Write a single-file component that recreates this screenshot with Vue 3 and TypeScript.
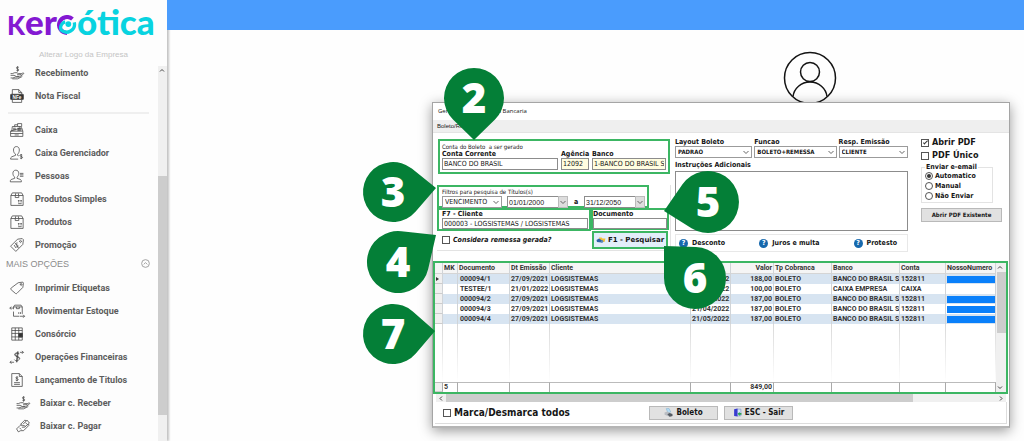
<script setup lang="ts">
import { computed, ref } from 'vue'

interface MenuEntry { label: string; icon: string; sub?: boolean }
interface Row { doc: string; issued: string; client: string; due: string; value: string; kind: string; bank: string; account: string; masked: boolean }
interface Pin { n: number; cx: number; cy: number; r: number; tx: number; ty: number }

const icons: Record<string, string> = {
  receive: 'M15 2.500c-1-1.200-4-1.200-4 .8s4 1.400 4 3.400-3 2-4 .6M13 .5v9M1 13h3l4-1.500h4l2 1.500h4c1.500 0 1.500 2 0 2h-6M18 14l4-2c1.500-.6 2 1 1 1.800L16 19H9l-4 1.500H1M1 16h6l4 2h5M4 22h9l8-4',
  invoice: 'M4 9V1h11l5 5v3M15 1v5h5M4 18v5h16v-5',
  register: 'M3 14l1-8h9M8 6V3h5M13 1h7v5h-7zM16 6v2M20 8l2 6v9H1v-9zM1 14h21M1 18h21M5 9h5M5 11.500h5M13 10h7M13 12h7M8 20.500h7M14 8v6M17 8v6',
  manager: 'M11 1C7.500 1 6 3.500 6 7c0 3 1.500 6 3.500 7v2L3 18.500c-1.500.8-2 2-2 4h13M11 1c3.500 0 5 2.500 5 6 0 3-1.500 6-3 7v2l2 1M21 15.500c-1-1-4-1-4 .8s4.500 1.200 4.500 3.200-3.500 2-4.500.7M19.300 14v8.500',
  people: 'M10 2C6.500 2 5 4.500 5 7.500c0 3 1.500 5.500 3 6.500v2L2 18c-1.200.6-1.500 2-1.500 4h19c0-2-.3-3.400-1.500-4l-6-2v-2c1.500-1 3-3.500 3-6.500C15 4.500 13.500 2 10 2zM17 7.500h6M17 10h6M17 12.500h6',
  box: 'M1.500 6L4 1.500h16L22.500 6v17h-21zM1.500 6h21M9 6l1-4M15 6l-1-4M9 6v3.500h6V6M14 20h6M15 18v-4l-1.200 1.200M15 14l1.200 1.200M19 18v-4l-1.200 1.200M19 14l1.200 1.200',
  promo: 'M13 2l8-1 2 2-1 8L10 23 1 14zM18 4.500a1.500 1.500 0 1 0 .1 0M13 8.500c-1.500-1-3.500.6-2.500 2.200s3 1 3.500 2.600-2 3-3.500 1.700M9 9l5.500 8M7 12l3 5',
  tag: 'M14 3l7-1c1.500 0 2 .5 2 2l-1 7-10 10c-1 1-2 1-3 0l-7-6c-1-1-1-2 0-3zM19 4.500a1.500 1.500 0 1 0 .1 0',
  move: 'M6 9V5l2-3h11l2 3v12M6 13v8h10M6 5h15M11 5v3h5V5M5 7H0M2 4.500L-.5 7 2 9.500M17 21h8M22.500 18.500L25 21l-2.500 2.500M15 17v-3M18 17v-3',
  grid: 'M3 1.500h18v21H3zM3 6h18M3 11h18M3 17h18M9 1.500v21M15 1.500v21M16 11h5v6h-5zM17 12h3v4h-3zM18 13v2',
  ops: 'M16 7c-1-3-8-3-8 1s8 3 8 7-7 4.500-8.500 1.500M15 7c-1-2-6-2-6 1s8 3 8 7M13 2.500L11 21M14 2.500L12 21M17 4h6M20.500 1.500L23 4l-2.500 2.500M7 21H0M2.500 18.500L0 21l2.500 2.500',
  title: 'M3 1h13l5 5v17H3zM16 1v5h5M14 7.500c-1-1-4-1-4 .8s4 1 4 3-3.500 2-4.300.7M12 6v8M7 16.500h10M7 19.500h10',
  pay: 'M1 17l6-6c1-1 3-1 4 0l5 1M1 17l3 5 4-2h5l9-9c.7-1.500-.7-2.500-2-1.800L15 14h-5M12 9l7-7 4 5-4 3.500M10 11l-2-2 7-7 3 1M16 6l3 3M6 15l3 3',
}

const mainMenu: MenuEntry[] = [
  { label: 'Caixa', icon: 'register' },
  { label: 'Caixa Gerenciador', icon: 'manager' },
  { label: 'Pessoas', icon: 'people' },
  { label: 'Produtos Simples', icon: 'box' },
  { label: 'Produtos', icon: 'box' },
  { label: 'Promoção', icon: 'promo' },
]
const menus: { id: string; items: MenuEntry[] }[] = [
  { id: 'top', items: [{ label: 'Recebimento', icon: 'receive' }, { label: 'Nota Fiscal', icon: 'invoice' }] },
  { id: 'main', items: mainMenu },
  {
    id: 'more',
    items: [
      { label: 'Imprimir Etiquetas', icon: 'tag' },
      { label: 'Movimentar Estoque', icon: 'move' },
      { label: 'Consórcio', icon: 'grid' },
      { label: 'Operações Financeiras', icon: 'ops' },
      { label: 'Lançamento de Titulos', icon: 'title' },
      { label: 'Baixar c. Receber', icon: 'receive', sub: true },
      { label: 'Baixar c. Pagar', icon: 'pay', sub: true },
    ],
  },
]

const rows: Row[] = [
  { doc: '000094/1', issued: '27/09/2021', client: 'LOGSISTEMAS', due: '21/02/2022', value: '188,00', kind: 'BOLETO', bank: 'BANCO DO BRASIL S', account: '152811', masked: true },
  { doc: 'TESTEE/1', issued: '21/01/2022', client: 'LOGSISTEMAS', due: '21/02/2022', value: '100,00', kind: 'BOLETO', bank: 'CAIXA EMPRESA', account: 'CAIXA', masked: false },
  { doc: '000094/2', issued: '27/09/2021', client: 'LOGSISTEMAS', due: '21/03/2022', value: '187,00', kind: 'BOLETO', bank: 'BANCO DO BRASIL S', account: '152811', masked: true },
  { doc: '000094/3', issued: '27/09/2021', client: 'LOGSISTEMAS', due: '21/04/2022', value: '187,00', kind: 'BOLETO', bank: 'BANCO DO BRASIL S', account: '152811', masked: true },
  { doc: '000094/4', issued: '27/09/2021', client: 'LOGSISTEMAS', due: '21/05/2022', value: '187,00', kind: 'BOLETO', bank: 'BANCO DO BRASIL S', account: '152811', masked: true },
]

const pins: Pin[] = [
  { n: 2, cx: 474, cy: 98, r: 30, tx: 474, ty: 140 },
  { n: 3, cx: 393, cy: 192, r: 30, tx: 436, ty: 188 },
  { n: 4, cx: 398, cy: 262, r: 31, tx: 436, ty: 235 },
  { n: 5, cx: 708, cy: 202, r: 31, tx: 664, ty: 211 },
  { n: 6, cx: 695, cy: 278, r: 31, tx: 664, ty: 246 },
  { n: 7, cx: 393, cy: 334, r: 30, tx: 435, ty: 331 },
]

/* A drop: the large arc of the circle closed by its two tangents through the tip. */
const drops = computed(() => pins.map((p) => {
  const dx = p.tx - p.cx
  const dy = p.ty - p.cy
  const base = Math.atan2(dy, dx)
  const spread = Math.acos(Math.min(1, p.r / Math.hypot(dx, dy)))
  const at = (a: number) => `${(p.cx + p.r * Math.cos(a)).toFixed(1)} ${(p.cy + p.r * Math.sin(a)).toFixed(1)}`
  return { ...p, d: `M${p.tx} ${p.ty}L${at(base + spread)}A${p.r} ${p.r} 0 1 1 ${at(base - spread)}Z` }
}))

const account = ref('BANCO DO BRASIL')
const agency = ref('12092')
const bank = ref('1-BANCO DO BRASIL S.A.')
const dateFrom = ref('01/01/2000')
const dateTo = ref('31/12/2050')
const client = ref('000003 - LOGSISTEMAS / LOGSISTEMAS')
const documentNo = ref('')
const notes = ref('')
const includeSent = ref(false)
const openPdf = ref(true)
const singlePdf = ref(false)
const markAll = ref(false)
const mailMode = ref('Automatico')
const choices = [
  { id: 'layout', label: 'Layout Boleto', value: 'PADRAO' },
  { id: 'role', label: 'Funcao', value: 'BOLETO+REMESSA' },
  { id: 'issuer', label: 'Resp. Emissão', value: 'CLIENTE' },
]
</script>

<template>
  <div class="app">
    <aside class="sidebar">
      <div class="logo">
        <span class="k">K</span><span class="er">er</span>
        <svg class="ring" viewBox="0 0 22 22" aria-hidden="true">
          <path d="M17 4.500A8.800 8.800 0 1 0 11 19.800" fill="none" stroke="#8419d2" stroke-width="4.400" />
          <path d="M19 8A8.800 8.800 0 0 1 4.500 16.500C3 13 5 8.500 9 7.500" fill="none" stroke="#08d3e0" stroke-width="3.600" />
          <circle cx="12.500" cy="10" r="3.200" fill="#08d3e0" />
        </svg>
        <span class="otica">ótica</span>
      </div>
      <a class="change" href="#">Alterar Logo da Empresa</a>
      <div class="scroller">
        <nav class="menu">
          <template v-for="group in menus" :key="group.id">
            <h2 v-if="group.id === 'more'">MAIS OPÇÕES
              <svg viewBox="0 0 10 10" aria-hidden="true"><circle cx="5" cy="5" r="4.300" /><path d="M3 6l2-2 2 2" /></svg>
            </h2>
            <ul :class="group.id">
              <li v-for="item in group.items" :key="item.label" :class="{ sub: item.sub }">
                <a href="#">
                  <svg viewBox="0 0 24 24" aria-hidden="true">
                    <path :d="icons[item.icon]" />
                    <g v-if="item.icon === 'invoice'"><rect x="1" y="9" width="22" height="9" rx="1" fill="#333" /><text x="12" y="16.500" text-anchor="middle">NFe</text></g>
                    <rect v-if="item.icon === 'grid'" x="15" y="11" width="6" height="6" fill="#333" />
                  </svg>
                  {{ item.label }}
                </a>
              </li>
            </ul>
          </template>
        </nav>
        <div class="track"><svg viewBox="0 0 8 8" aria-hidden="true"><path d="M2 5l2-2 2 2" /></svg><span class="thumb"></span></div>
      </div>
    </aside>

    <main>
      <header></header>
      <svg class="avatar" viewBox="0 0 54 54" aria-label="Usuário" role="img">
        <circle cx="27" cy="27" r="25.500" /><circle cx="27" cy="21" r="9.500" /><path d="M10 45.500c1-8 8-14.500 17-14.500s16 6.500 17 14.500" />
      </svg>

      <section class="dialog">
        <h1>Gerenciador Cobrança Bancaria</h1>
        <div class="tabs"><button type="button">Boleto/Remessa</button></div>

        <form class="body" @submit.prevent>
          <div class="form">
            <div class="left">
              <fieldset class="mark account">
                <legend>Conta do Boleto&nbsp; a ser gerado</legend>
                <label class="wide">Conta Corrente<input v-model="account" type="text"></label>
                <label class="agency">Agência<input v-model="agency" type="text"></label>
                <label class="bank">Banco<input v-model="bank" type="text"></label>
              </fieldset>

              <div class="filters">
                <fieldset class="mark period">
                  <legend>Filtros para pesquisa de Títulos(s)</legend>
                  <span class="pick kind"><select aria-label="Tipo de data"><option>VENCIMENTO</option></select><svg viewBox="0 0 8 8"><path d="M1.500 3L4 5.500 6.500 3" /></svg></span>
                  <span class="pick date"><input v-model="dateFrom" type="text" aria-label="Data inicial"><svg viewBox="0 0 8 8"><path d="M1.500 3L4 5.500 6.500 3" /></svg></span>
                  <b>a</b>
                  <span class="pick date"><input v-model="dateTo" type="text" aria-label="Data final"><svg viewBox="0 0 8 8"><path d="M1.500 3L4 5.500 6.500 3" /></svg></span>
                </fieldset>
                <div class="pair">
                  <label class="mark client">F7 - Cliente<input v-model="client" type="text"></label>
                  <label class="mark docno">Documento<input v-model="documentNo" type="text"></label>
                </div>
                <div class="actions">
                  <label class="tick"><input v-model="includeSent" type="checkbox"><i>Considera remessa gerada?</i></label>
                  <button class="mark search" type="button">
                    <svg viewBox="0 0 20 14" aria-hidden="true"><path d="M6 2h5l2 2h6l-2 7H8z" fill="#f3c13a" /><path d="M1 7l5-3 8 5-3 3-9-1z" fill="#2b62a8" /><circle cx="12" cy="10" r="2.500" fill="#5a87bd" /></svg>
                    F1 - Pesquisar
                  </button>
                </div>
              </div>
            </div>

            <div class="middle">
              <div class="choices">
                <label v-for="c in choices" :key="c.id" :class="c.id">{{ c.label }}
                  <span class="pick"><select><option>{{ c.value }}</option></select><svg viewBox="0 0 8 8"><path d="M1.500 3L4 5.500 6.500 3" /></svg></span>
                </label>
              </div>
              <label class="notes">Instruções Adicionais<textarea v-model="notes"></textarea></label>
              <div class="help">
                <button v-for="h in ['Desconto', 'Juros e multa', 'Protesto']" :key="h" type="button"><span class="q">?</span>{{ h }}</button>
              </div>
            </div>

            <div class="right">
              <label class="tick big"><input v-model="openPdf" type="checkbox">Abrir PDF</label>
              <label class="tick big"><input v-model="singlePdf" type="checkbox">PDF Único</label>
              <fieldset class="mail">
                <legend>Enviar e-email</legend>
                <label v-for="m in ['Automatico', 'Manual', 'Não Enviar']" :key="m" class="tick"><input v-model="mailMode" type="radio" name="mail" :value="m">{{ m }}</label>
              </fieldset>
              <button class="plain" type="button">Abrir PDF Existente</button>
            </div>
          </div>

          <div class="mark gridbox">
            <table>
              <colgroup><col class="c-ind"><col class="c-mk"><col class="c-doc"><col class="c-date"><col><col class="c-date"><col class="c-val"><col class="c-kind"><col class="c-bank"><col class="c-acc"><col class="c-num"></colgroup>
              <thead>
                <tr><th></th><th>MK</th><th>Documento</th><th>Dt Emissão</th><th>Cliente</th><th></th><th class="num">Valor</th><th>Tp Cobranca</th><th>Banco</th><th>Conta</th><th>NossoNumero</th></tr>
              </thead>
              <tbody>
                <tr v-for="(r, i) in rows" :key="r.doc">
                  <td class="ind"><span v-if="i === 0" class="arrow"></span></td><td></td><td>{{ r.doc }}</td><td>{{ r.issued }}</td><td>{{ r.client }}</td><td>{{ r.due }}</td>
                  <td class="num">{{ r.value }}</td><td>{{ r.kind }}</td><td>{{ r.bank }}</td><td>{{ r.account }}</td><td><span v-if="r.masked" class="bar"></span></td>
                </tr>
                <tr class="rest"><td v-for="n in 11" :key="n"></td></tr>
              </tbody>
              <tfoot>
                <tr><td class="ind"></td><td>5</td><td></td><td></td><td></td><td></td><td class="num">849,00</td><td></td><td></td><td></td><td></td></tr>
              </tfoot>
            </table>
            <div class="vbar"><svg viewBox="0 0 8 8"><path d="M2 5l2-2 2 2" /></svg><span></span><svg viewBox="0 0 8 8"><path d="M2 3l2 2 2-2" /></svg></div>
          </div>
          <div class="hbar"><svg viewBox="0 0 8 8"><path d="M5 2L3 4l2 2" /></svg><span></span><svg viewBox="0 0 8 8"><path d="M3 2l2 2-2 2" /></svg></div>

          <footer>
            <label class="tick all"><input v-model="markAll" type="checkbox">Marca/Desmarca todos</label>
            <button class="plain cmd" type="button">
              <svg viewBox="0 0 16 16" aria-hidden="true"><path d="M4 1h5l3 6-5 2z" fill="#b5dcf5" stroke="#83b4d5" /><path d="M1 8l5-2 9 4v4l-5 1.500L1 12z" fill="#b8bcc2" /><path d="M6 11l4-2 5 2v3l-5 1.500z" fill="#555b63" /></svg>
              Boleto
            </button>
            <button class="plain cmd" type="button">
              <svg viewBox="0 0 16 16" aria-hidden="true"><path d="M7 2h7v12H7z" fill="#d6e6f7" stroke="#6b87c7" /><path d="M2 2l6-1v14l-6-1z" fill="#3a3bd0" /><path d="M8 10l4-3v2h3v3h-3v2z" fill="#2ba351" /></svg>
              ESC - Sair
            </button>
          </footer>
        </form>
      </section>
    </main>

    <svg class="pins">
      <g v-for="p in drops" :key="p.n"><path :d="p.d" /><text :x="p.cx" :y="p.cy + 15">{{ p.n }}</text></g>
    </svg>
  </div>
</template>

<style>
html, body { background: #fefefe; }
</style>

<style scoped>
.app { position: relative; display: flex; min-height: 100vh; overflow: hidden; font: 7px/8px "DejaVu Sans Condensed", "DejaVu Sans", sans-serif; color: #161616; }
.app *, .app *::before { box-sizing: border-box; }
h1, h2, ul, fieldset, legend { margin: 0; padding: 0; }
ul { list-style: none; }
a { color: inherit; text-decoration: none; }
fieldset { min-width: 0; }
button, input, select, textarea { font: inherit; color: inherit; margin: 0; padding: 0; border-radius: 0; min-width: 0; }

/* sidebar */
.sidebar { width: 167px; flex: none; display: flex; flex-direction: column; background: #fdfdfd; box-shadow: 2px 0 2px #c4c4c4; font-family: "Liberation Sans", Arial, sans-serif; position: relative; z-index: 1; height: 100vh; }
.logo { display: flex; align-items: baseline; height: 44px; padding-left: 7px; font: 900 35px/42px Lato, sans-serif; color: #8419d2; }
.k { font-size: 26px; }
.otica { color: #08d3e0; }
.ring { width: 20px; height: 20px; flex: none; }
.change { height: 22px; text-align: center; color: #c4c4c4; font-size: 8px; line-height: 22px; }
.scroller { flex: 1; min-height: 0; display: flex; }
.menu { flex: 1; overflow: hidden; font: bold 9px Roboto, sans-serif; color: #5c5c5c; }
.menu a { display: flex; align-items: center; gap: 11px; height: 23px; padding-left: 10px; white-space: nowrap; }
.menu .sub a { padding-left: 16px; gap: 10px; }
.menu svg { width: 14px; height: 14px; overflow: visible; fill: none; stroke: #444; stroke-width: 1.300; }
.menu svg text { font: bold 8px "Liberation Sans", sans-serif; fill: #fff; stroke: none; }
.menu .top { margin: -5px 9px 0 8px; padding-bottom: 5px; border-bottom: 2px solid #efefef; }
.menu .top a { margin: 0 -9px 0 -8px; }
.menu .main { padding-top: 4px; }
.menu h2 { display: flex; justify-content: space-between; align-items: center; padding: 0 8px 0 6px; height: 15px; font: 9px "Liberation Sans", sans-serif; color: #8b8b8b; }
.menu h2 svg { width: 9px; height: 9px; stroke: #999; stroke-width: 1; }
.menu .more { padding-top: 5px; }
.track { width: 9px; background: #f0f0f0; }
.track svg, .vbar svg, .hbar svg { display: block; width: 8px; height: 9px; fill: none; stroke: #444; }
.thumb { display: block; margin-top: 101px; height: 239px; background: #cdcdcd; }

/* page */
main { flex: 1; min-width: 0; display: flex; flex-direction: column; }
header { position: relative; z-index: 2; height: 30px; background: #4a9cfd; }
.avatar { align-self: flex-end; width: 54px; height: 54px; margin: 21px 187px -3px 0; fill: none; stroke: #141414; stroke-width: 1.500; }

/* dialog */
.dialog { position: relative; margin: 0 14px 14px 265px; padding-bottom: 2px; background: #fff; border: 1px solid #a5a5a5; border-bottom: 2px solid #b5b5b5; box-shadow: 0 3px 12px #0006; }
h1 { height: 17px; font: 6px/17px "Open Sans", sans-serif; padding-left: 5px; }
.tabs { height: 12px; background: #efefef; padding-left: 4px; }
.tabs button { border: 0; background: none; font: 6px/12px "Liberation Sans", sans-serif; display: block; }
.body { border-top: 1px solid #e4e4e4; }
.form { display: flex; padding: 5px 6px 0 4px; height: 128px; font-weight: bold; }
.left { width: 234px; flex: none; }
.mark { border: 2px solid #3cb663; }
.form label { display: block; white-space: nowrap; }
.form input[type="text"] { display: block; width: 100%; height: 12px; border: 1px solid #8c8c8c; background: #fff; font-weight: normal; padding: 0 1px; }
.mark legend { font-size: 6px; }
legend { display: block; float: left; width: 100%; font-weight: normal; line-height: 7px; white-space: nowrap; }
.account { height: 35px; margin: 1px 1px 0 1px; padding: 2px 2px 0; display: grid; grid-template: 7px 21px / 116px 28px 1fr; column-gap: 3px; }
.account legend, .period legend { grid-column: 1 / -1; }
.account .agency input, .account .bank input { background: #fffde0; }
.filters { margin: 11px 0 0; border: 1px solid #e3e3e3; border-width: 0 1px 1px 0; padding-bottom: 1px; }
.period { width: 212px; height: 23px; padding: 1px 2px 0 3px; display: grid; grid-template: 8px 12px / 60px 61px 6px 61px; column-gap: 5px; }
.period b { font-size: 7px; line-height: 12px; text-align: center; }
.pick { position: relative; display: block; height: 12px; }
.pick select { appearance: none; display: block; width: 100%; height: 12px; border: 1px solid #9b9b9b; background: #fff; padding: 0 10px 0 2px; }
.pick svg { position: absolute; right: 2px; top: 2px; width: 8px; height: 8px; fill: none; stroke: #666; pointer-events: none; }
.kind select { font-weight: normal; }
.pick.date svg { right: 0; top: 0; width: 10px; height: 12px; background: #ddd; border: 1px solid #bbb; }
.form .date input { font: 7px "Liberation Sans", sans-serif; }
.pair { display: flex; align-items: flex-start; }
.client { width: 154px; padding: 0 1px 0 3px; height: 23px; }
.docno { width: 78px; height: 22px; }
.form .pair input { height: 11px; }
.actions { display: flex; justify-content: space-between; align-items: center; padding: 0 2px 0 5px; height: 18px; }
.form .tick { display: flex; align-items: center; gap: 3px; }
.tick input { appearance: none; width: 8px; height: 8px; border: 1px solid #555; background: #fff; display: grid; place-items: center; flex: none; }
.tick input[type="checkbox"]:checked::before { content: ""; width: 5px; height: 2px; margin-bottom: 2px; border: 1px solid #333; border-width: 0 0 1px 1px; transform: rotate(-45deg); }
.tick input[type="radio"] { border-radius: 50%; }
.tick input[type="radio"]:checked::before { content: ""; width: 4px; height: 4px; border-radius: 50%; background: #333; }
.search { width: 76px; height: 18px; display: flex; align-items: center; justify-content: center; gap: 2px; background: #e3eefa; font: bold 7px "DejaVu Sans", sans-serif; white-space: nowrap; }
.search svg { width: 10px; height: 8px; }
.middle { flex: 1; min-width: 0; margin-left: 4px; }
.choices { display: grid; grid-template-columns: 78fr 83fr 70fr; column-gap: 2px; }
.choices .pick select { font-size: 6px; font-weight: bold; }
.notes { margin-top: 2px; line-height: 10px; }
.notes textarea { display: block; width: 100%; height: 60px; margin-top: 1px; border: 1px solid #8c8c8c; resize: none; }
.help { display: flex; justify-content: space-between; align-items: center; height: 18px; margin-top: 3px; padding: 0 10px 0 3px; border: 1px solid #e8e8e8; }
.help button { display: flex; align-items: center; gap: 4px; border: 0; background: none; }
.q { width: 9px; height: 9px; border-radius: 50%; background: #1668ad; color: #fff; line-height: 9px; text-align: center; }
.right { width: 82px; flex: none; margin: -2px 0 0 13px; }
.form .big { font-size: 9px; line-height: 13px; height: 13px; }
.mail { border: 1px solid #e3e3e3; width: 72px; height: 39px; margin-top: 2px; padding: 1px 3px 0; }
.mail legend { float: none; width: auto; padding: 0 1px; font-weight: bold; line-height: 6px; }
.form .mail .tick { height: 10px; gap: 2px; }
.plain { border: 1px solid #b9b9b9; background: #e1e1e1; }
.right .plain { width: 81px; height: 14px; margin-top: 5px; font-size: 6px; font-weight: bold; display: block; white-space: nowrap; }

/* grid */
.gridbox { display: flex; margin-right: 1px; height: 133px; }
table { flex: 1; width: 0; table-layout: fixed; border-collapse: separate; border-spacing: 0; font: bold 7px/9px Roboto, Arial, sans-serif; color: #333; }
.c-ind { width: 8px; } .c-mk { width: 15px; } .c-doc { width: 52px; } .c-date { width: 40px; } .c-val { width: 43px; }
.c-kind { width: 58px; } .c-bank { width: 68px; } .c-acc { width: 46px; } .c-num { width: 50px; }
th, td { padding: 0 0 0 1px; text-align: left; white-space: nowrap; overflow: hidden; border-right: 1px solid #d0d4d8; height: 10px; line-height: 10px; }
th { height: 11px; background: #f5f5f5; border-bottom: 1px solid #d5d5d5; font-weight: bold; }
tbody tr:nth-child(odd) td { background: #d7e4f1; }
tbody td:nth-child(3) { padding-left: 2px; }
tbody tr .ind, tbody tr:nth-child(odd) .ind, tfoot .ind { background: #f0f0f0; border-bottom: 1px solid #ccc; }
.num { text-align: right; padding-right: 1px; }
.arrow { display: block; width: 0; border: 2px solid transparent; border-left: 3px solid #333; border-right: 0; }
.bar { display: block; height: 7px; background: #0a80fa; }
tbody .rest td, tbody .rest:nth-child(odd) td { height: 58px; background: #fff; border-right-color: transparent; border-image: linear-gradient(#d8d8d8, #fff) 1; border-image-width: 0 1px 0 0; }
tfoot td { border-top: 1px solid #bbb; border-right: 1px solid #aaa; height: 10px; line-height: 9px; }
.vbar { width: 10px; display: flex; flex-direction: column; background: #f0f0f0; }
.vbar span { height: 61px; margin-bottom: auto; background: #cdcdcd; margin-left: 1px; }
.hbar { display: flex; align-items: center; height: 8px; margin: 0 3px; background: #f0f0f0; }
.hbar span { width: 82%; height: 8px; margin-right: auto; background: #cdcdcd; }
.hbar svg { margin: 0 1px; }
footer { display: flex; align-items: center; height: 22px; margin: 0 2px 0 2px; padding-left: 8px; border: 1px solid #ddd; border-width: 0 1px 1px 0; font-weight: bold; font-size: 8px; }
footer .tick { display: flex; align-items: center; gap: 3px; width: 206px; font-size: 10px; line-height: 12px; }
.cmd { display: flex; align-items: center; justify-content: center; gap: 3px; width: 69px; height: 14px; margin-right: 6px; }
.cmd svg { width: 9px; height: 9px; }

/* numbered callouts */
.pins { position: absolute; inset: 0; width: 100%; height: 100%; pointer-events: none; z-index: 2; fill: #047f37; }
.pins text { font: 800 42px "Open Sans", sans-serif; fill: #fff; text-anchor: middle; }
</style>
